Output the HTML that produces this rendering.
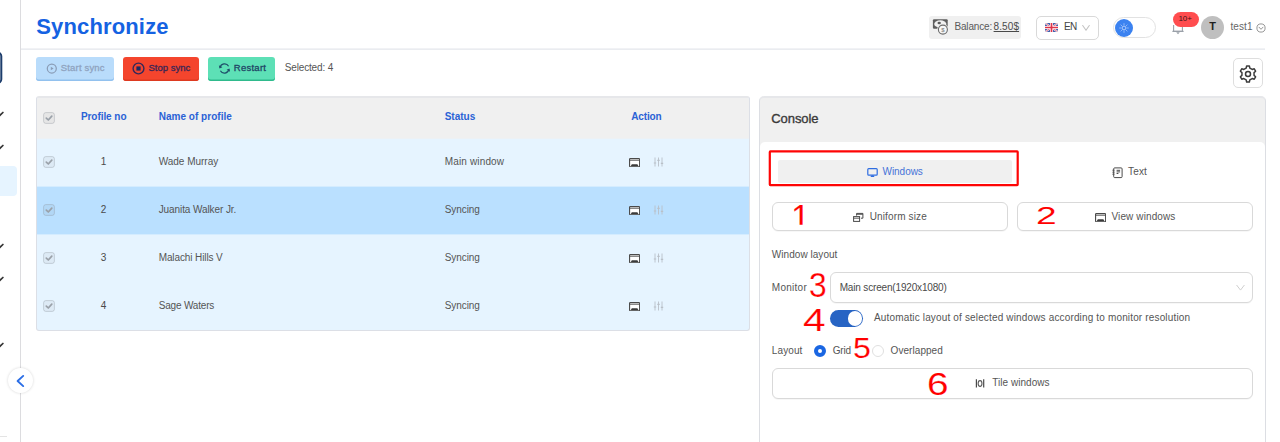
<!DOCTYPE html>
<html lang="en">
<head>
<meta charset="utf-8">
<title>Synchronize</title>
<style>
html,body{margin:0;padding:0;background:#fff}
html{width:1280px;height:442px;overflow:hidden}
body{width:1280px;height:442px;overflow:hidden;position:relative;font-family:"Liberation Sans",sans-serif}
.b{position:absolute;display:block}
.t{position:absolute;white-space:nowrap;line-height:1;display:block}

</style>
</head>
<body>
<aside class="side">
<div class="b " style="left:20px;top:0px;width:1px;height:442px;background:#dcdcdf"></div>
<svg class="b" style="left:0px;top:48px;" width="6" height="40" viewBox="0 48 6 40"><rect x="-20" y="52.7" width="21.3" height="30.2" rx="3.6" fill="#fff" stroke="#1d3d6c" stroke-width="2"/></svg>
<svg class="b" style="left:-6px;top:111.3px;" width="10" height="8" viewBox="-6 -4 10 8"><path d="M-5 -2.2 L-1.4 1.6 L2.9 -2.5" fill="none" stroke="#333" stroke-width="1.7" stroke-linecap="round" stroke-linejoin="round"/></svg>
<svg class="b" style="left:-6px;top:144.2px;" width="10" height="8" viewBox="-6 -4 10 8"><path d="M-5 -2.2 L-1.4 1.6 L2.9 -2.5" fill="none" stroke="#333" stroke-width="1.7" stroke-linecap="round" stroke-linejoin="round"/></svg>
<svg class="b" style="left:-6px;top:242.8px;" width="10" height="8" viewBox="-6 -4 10 8"><path d="M-5 -2.2 L-1.4 1.6 L2.9 -2.5" fill="none" stroke="#333" stroke-width="1.7" stroke-linecap="round" stroke-linejoin="round"/></svg>
<svg class="b" style="left:-6px;top:275.6px;" width="10" height="8" viewBox="-6 -4 10 8"><path d="M-5 -2.2 L-1.4 1.6 L2.9 -2.5" fill="none" stroke="#333" stroke-width="1.7" stroke-linecap="round" stroke-linejoin="round"/></svg>
<svg class="b" style="left:-6px;top:341.6px;" width="10" height="8" viewBox="-6 -4 10 8"><path d="M-5 -2.2 L-1.4 1.6 L2.9 -2.5" fill="none" stroke="#333" stroke-width="1.7" stroke-linecap="round" stroke-linejoin="round"/></svg>
<div class="b " style="left:-10px;top:166px;width:27px;height:30px;background:#e6f4ff;border-radius:4px"></div>
<div class="b " style="left:0px;top:436px;width:7px;height:1px;background:#e4e4e4"></div>
<div class="b " style="left:8px;top:368px;width:25px;height:25px;border-radius:50%;background:#fff;box-shadow:0 0 3px rgba(0,0,0,.16)"></div>
<svg class="b" style="left:14px;top:374px;" width="12" height="14" viewBox="0 0 12 14"><path d="M9.2 1.9 L3.6 7 L9.2 12.1" fill="none" stroke="#2b6ee6" stroke-width="1.9" stroke-linecap="round" stroke-linejoin="round"/></svg>
</aside>
<header class="head">
<div class="b " style="left:21px;top:48px;width:1244px;height:1px;background:#f1f2f5"></div>
<div class="b " style="left:21px;top:49px;width:1244px;height:1px;background:#eaecf0"></div>
<span class="t " style="left:36.20px;top:16.00px;font-size:22px;color:#1562e2;font-weight:bold;letter-spacing:0.152px;">Synchronize</span>
<div class="b " style="left:929px;top:16px;width:92px;height:23px;background:#f0f0f0;border-radius:3px"></div>
<svg class="b" style="left:932px;top:18px;" width="17" height="18" viewBox="0 0 17 18"><rect x="0.9" y="1.2" width="14.8" height="9.6" rx="1.1" fill="#5e5e5e"/><ellipse cx="8.3" cy="6" rx="6.1" ry="3.7" fill="#f1f1f1"/><ellipse cx="7.2" cy="5" rx="1.7" ry="1.3" fill="#5a5a5a"/><circle cx="10.9" cy="11.6" r="5.7" fill="#f0f0f0"/><circle cx="10.9" cy="11.6" r="4.5" fill="#f7f7f7" stroke="#6c6c6c" stroke-width="1.1"/><text x="10.8" y="13.6" font-size="6" font-weight="bold" text-anchor="middle" fill="#8a8a8a" font-family="Liberation Sans, sans-serif">$</text></svg>
<span class="t " style="left:954.40px;top:22.00px;font-size:10px;color:#5a5a5a;letter-spacing:-0.145px;">Balance:</span>
<span class="t " style="left:993.60px;top:22.00px;font-size:10px;color:#4a4a4a;letter-spacing:0.095px;text-decoration:underline;text-decoration-thickness:1px;text-underline-offset:1px">8.50$</span>
<div class="b " style="left:1036px;top:16px;width:63px;height:24px;border:1px solid #d9d9d9;border-radius:5px;background:#fff;box-sizing:border-box"></div>
<svg class="b" style="left:1045px;top:23px;border-radius:2px" width="13" height="9" viewBox="0 0 26 18"><rect width="26" height="18" rx="3" fill="#4560ad"/><path d="M0 0 L26 18 M26 0 L0 18" stroke="#fff" stroke-width="3.6"/><path d="M0 0 L26 18 M26 0 L0 18" stroke="#e0344a" stroke-width="1.4"/><path d="M13 0 V18 M0 9 H26" stroke="#fff" stroke-width="6"/><path d="M13 0 V18 M0 9 H26" stroke="#e0344a" stroke-width="3.4"/></svg>
<span class="t " style="left:1064.00px;top:22.00px;font-size:10px;color:#444;letter-spacing:-0.600px;">EN</span>
<svg class="b" style="left:1082px;top:24px;" width="8" height="8" viewBox="0 0 8 8"><path d="M0.7 1.5 L4 6.3 L7.3 1.5" fill="none" stroke="#c4c4c4" stroke-width="1.1" stroke-linecap="round" stroke-linejoin="round"/></svg>
<div class="b " style="left:1113px;top:17px;width:43px;height:21px;border:1px solid #e2e2e2;border-radius:11px;background:#fff;box-sizing:border-box"></div>
<div class="b " style="left:1115px;top:18.5px;width:18px;height:18px;border-radius:50%;background:#3b82f0"></div>
<svg class="b" style="left:1118px;top:21.5px;" width="12" height="12" viewBox="-6 -6 12 12"><circle r="1.9" fill="none" stroke="#cfe0ff" stroke-width="0.9" opacity="0.85"/><path d="M0 -4.4V-3.1 M0 3.1V4.4 M-4.4 0H-3.1 M3.1 0H4.4 M-3.1 -3.1L-2.2 -2.2 M2.2 2.2L3.1 3.1 M-3.1 3.1L-2.2 2.2 M2.2 -2.2L3.1 -3.1" stroke="#cfe0ff" stroke-width="0.8" stroke-linecap="round" opacity="0.7"/></svg>
<svg class="b" style="left:1172px;top:22px;" width="12" height="13" viewBox="0 0 12 13"><path d="M1.6 3 V9.2 H10.4 V3" fill="none" stroke="#9aa0a8" stroke-width="1.1"/><path d="M0.4 9.4 H11.6" stroke="#9aa0a8" stroke-width="1.2"/><path d="M4.2 10.2 L6 12.2 L7.8 10.2 Z" fill="#9aa0a8"/></svg>
<div class="b " style="left:1172.5px;top:12px;width:26px;height:15px;background:#ff4d4f;border-radius:8px"></div>
<span class="t " style="left:1135.20px;width:100px;text-align:center;top:15.00px;font-size:8px;color:#3a1616;letter-spacing:-0.145px;text-indent:-0.145px;">10+</span>
<div class="b " style="left:1201px;top:16px;width:23px;height:23px;border-radius:50%;background:#bfbfbf"></div>
<span class="t " style="left:1162.50px;width:100px;text-align:center;top:21.00px;font-size:11px;color:#1f1f1f;font-weight:bold;">T</span>
<span class="t " style="left:1230.50px;top:22.00px;font-size:10px;color:#666;letter-spacing:0.080px;">test1</span>
<svg class="b" style="left:1255.5px;top:23px;" width="10" height="10" viewBox="0 0 10 10"><circle cx="5" cy="5" r="4.1" fill="none" stroke="#8a8a8a" stroke-width="0.9"/><path d="M3 4.2 L5 6.3 L7 4.2" fill="none" stroke="#8a8a8a" stroke-width="0.9" stroke-linecap="round" stroke-linejoin="round"/></svg>
</header>
<div class="tools">
<div class="b " style="left:36px;top:57px;width:78px;height:24px;background:#b9dcfb;border-radius:3px;box-shadow:inset 0 -1.5px 0 #92c1ee"></div>
<svg class="b" style="left:46px;top:62.5px;" width="11" height="11" viewBox="0 0 11 11"><circle cx="5.8" cy="5.5" r="4.5" fill="none" stroke="#8a9cb6" stroke-width="1.25"/><path d="M4.8 3.7 L7.6 5.5 L4.8 7.3 Z" fill="#8a9cb6"/></svg>
<span class="t " style="left:60.80px;top:63.00px;font-size:9.5px;color:#8fa3c0;letter-spacing:0.171px;-webkit-text-stroke:0.3px #8fa3c0">Start sync</span>
<div class="b " style="left:123px;top:57px;width:76px;height:24px;background:#f4452d;border-radius:3px;box-shadow:inset 0 -1.5px 0 #dd3a20"></div>
<svg class="b" style="left:132.3px;top:61.5px;" width="13" height="13" viewBox="0 0 13 13"><circle cx="6.5" cy="6.5" r="5.4" fill="none" stroke="#33285a" stroke-width="1.4"/><rect x="4.4" y="4.4" width="4.2" height="4.2" fill="#1d2a63"/></svg>
<span class="t " style="left:148.50px;top:63.00px;font-size:9.5px;color:#3b2555;letter-spacing:-0.005px;-webkit-text-stroke:0.3px #3b2555">Stop sync</span>
<div class="b " style="left:208px;top:57px;width:67px;height:24px;background:#5de0b6;border-radius:3px;box-shadow:inset 0 -1.5px 0 #2fba8c"></div>
<svg class="b" style="left:217.5px;top:62px;" width="13" height="13" viewBox="0 0 13 13"><path d="M2.1 5.6 A4.6 4.6 0 0 1 10.6 4.2" fill="none" stroke="#1f4f6a" stroke-width="1.2"/><path d="M10.9 7.4 A4.6 4.6 0 0 1 2.4 8.8" fill="none" stroke="#1f4f6a" stroke-width="1.2"/><path d="M0.9 3.2 L1.5 6.4 L4.4 5.3 Z" fill="#1f4f6a"/><path d="M12.1 9.8 L11.5 6.6 L8.6 7.7 Z" fill="#1f4f6a"/></svg>
<span class="t " style="left:233.80px;top:63.00px;font-size:9.5px;color:#1f4565;letter-spacing:0.259px;-webkit-text-stroke:0.3px #1f4565">Restart</span>
<span class="t " style="left:284.70px;top:63.00px;font-size:10px;color:#555;letter-spacing:-0.143px;">Selected: 4</span>
<div class="b " style="left:1233px;top:58px;width:30px;height:30px;border:1px solid #dedede;border-radius:5px;background:#fff;box-sizing:border-box"></div>
<svg class="b" style="left:1239px;top:64.5px;" width="18" height="18" viewBox="-9 -9 18 18"><path d="M-1.83 -5.92 L-1.37 -7.98 L1.37 -7.98 L1.83 -5.92 L4.21 -4.55 L6.23 -5.18 L7.60 -2.80 L6.05 -1.37 L6.05 1.37 L7.60 2.80 L6.23 5.18 L4.21 4.55 L1.83 5.92 L1.37 7.98 L-1.37 7.98 L-1.83 5.92 L-4.21 4.55 L-6.23 5.18 L-7.60 2.80 L-6.05 1.37 L-6.05 -1.37 L-7.60 -2.80 L-6.23 -5.18 L-4.21 -4.55 Z" fill="none" stroke="#3c3c3c" stroke-width="1.5" stroke-linejoin="round"/><circle r="2.5" fill="none" stroke="#3c3c3c" stroke-width="1.5"/></svg>
</div>
<section class="tbl">
<div class="b " style="left:36px;top:96px;width:714px;height:235px;border:1px solid #dcdfe6;border-top:2px solid #e6e7ea;border-radius:3px;box-sizing:border-box;overflow:hidden;background:#e6f4ff"><div class="b " style="left:0px;top:0px;width:714px;height:40px;background:#f0f0f0"></div><div class="b " style="left:0px;top:40px;width:714px;height:1px;background:#edf1f4"></div><div class="b " style="left:0px;top:88px;width:714px;height:49px;background:#d4ecff"></div><div class="b " style="left:0px;top:89px;width:714px;height:47px;background:#bae0ff"></div></div>
<span class="t " style="left:53.70px;width:100px;text-align:center;top:112.00px;font-size:10px;color:#2a62d6;font-weight:bold;letter-spacing:-0.057px;text-indent:-0.057px;">Profile no</span>
<span class="t " style="left:158.70px;top:112.00px;font-size:10px;color:#2a62d6;font-weight:bold;letter-spacing:0.023px;">Name of profile</span>
<span class="t " style="left:444.70px;top:112.00px;font-size:10px;color:#2a62d6;font-weight:bold;letter-spacing:0.008px;">Status</span>
<span class="t " style="left:596.40px;width:100px;text-align:center;top:112.00px;font-size:10px;color:#2a62d6;font-weight:bold;letter-spacing:-0.151px;text-indent:-0.151px;">Action</span>
<svg class="b" style="left:41px;top:109.5px;" width="16" height="16" viewBox="0 0 16 16"><rect x="2.6" y="2.6" width="10.8" height="10.8" rx="2.2" fill="rgba(0,0,0,.04)" stroke="rgba(140,146,155,.36)" stroke-width="1"/><path d="M5.3 8.1 L7.3 10 L10.8 6.2" fill="none" stroke="#9aa1a9" stroke-width="1.7" stroke-linecap="round" stroke-linejoin="round"/></svg>
<svg class="b" style="left:41px;top:154.4px;" width="16" height="16" viewBox="0 0 16 16"><rect x="2.6" y="2.6" width="10.8" height="10.8" rx="2.2" fill="rgba(0,0,0,.04)" stroke="rgba(140,146,155,.36)" stroke-width="1"/><path d="M5.3 8.1 L7.3 10 L10.8 6.2" fill="none" stroke="#9aa1a9" stroke-width="1.7" stroke-linecap="round" stroke-linejoin="round"/></svg>
<span class="t " style="left:53.50px;width:100px;text-align:center;top:157.00px;font-size:10px;color:#4a4a4a;">1</span>
<span class="t " style="left:158.70px;top:157.00px;font-size:10px;color:#555;letter-spacing:-0.014px;">Wade Murray</span>
<span class="t " style="left:444.70px;top:157.00px;font-size:10px;color:#555;letter-spacing:0.155px;">Main window</span>
<svg class="b" style="left:629px;top:157.8px;" width="11.2" height="9.3" viewBox="0 0 12 10"><rect x="0.6" y="0.6" width="10.8" height="8.8" rx="0.8" fill="#fff" stroke="#4a4a4a" stroke-width="1.2"/><path d="M0.6 2.3 H11.4" stroke="#4a4a4a" stroke-width="1.1"/><path d="M1.8 9 L3 6.6 H9 L10.2 9 Z" fill="#3a3a3a"/></svg>
<svg class="b" style="left:653px;top:157px;" width="11" height="10" viewBox="0 0 11 10"><path d="M2 0.5 V9.5 M5.5 0.5 V9.5 M9 0.5 V9.5" stroke="#b9c0c8" stroke-width="0.9"/><path d="M0.8 6 H3.2 M4.3 3.4 H6.7 M7.8 6.4 H10.2" stroke="#b9c0c8" stroke-width="1.1"/></svg>
<svg class="b" style="left:41px;top:202.4px;" width="16" height="16" viewBox="0 0 16 16"><rect x="2.6" y="2.6" width="10.8" height="10.8" rx="2.2" fill="rgba(0,0,0,.04)" stroke="rgba(140,146,155,.36)" stroke-width="1"/><path d="M5.3 8.1 L7.3 10 L10.8 6.2" fill="none" stroke="#9aa1a9" stroke-width="1.7" stroke-linecap="round" stroke-linejoin="round"/></svg>
<span class="t " style="left:53.50px;width:100px;text-align:center;top:205.00px;font-size:10px;color:#4a4a4a;">2</span>
<span class="t " style="left:158.70px;top:205.00px;font-size:10px;color:#555;letter-spacing:-0.088px;">Juanita Walker Jr.</span>
<span class="t " style="left:444.70px;top:205.00px;font-size:10px;color:#555;letter-spacing:-0.062px;">Syncing</span>
<svg class="b" style="left:629px;top:205.8px;" width="11.2" height="9.3" viewBox="0 0 12 10"><rect x="0.6" y="0.6" width="10.8" height="8.8" rx="0.8" fill="#fff" stroke="#4a4a4a" stroke-width="1.2"/><path d="M0.6 2.3 H11.4" stroke="#4a4a4a" stroke-width="1.1"/><path d="M1.8 9 L3 6.6 H9 L10.2 9 Z" fill="#3a3a3a"/></svg>
<svg class="b" style="left:653px;top:205px;" width="11" height="10" viewBox="0 0 11 10"><path d="M2 0.5 V9.5 M5.5 0.5 V9.5 M9 0.5 V9.5" stroke="#b9c0c8" stroke-width="0.9"/><path d="M0.8 6 H3.2 M4.3 3.4 H6.7 M7.8 6.4 H10.2" stroke="#b9c0c8" stroke-width="1.1"/></svg>
<svg class="b" style="left:41px;top:250.39999999999998px;" width="16" height="16" viewBox="0 0 16 16"><rect x="2.6" y="2.6" width="10.8" height="10.8" rx="2.2" fill="rgba(0,0,0,.04)" stroke="rgba(140,146,155,.36)" stroke-width="1"/><path d="M5.3 8.1 L7.3 10 L10.8 6.2" fill="none" stroke="#9aa1a9" stroke-width="1.7" stroke-linecap="round" stroke-linejoin="round"/></svg>
<span class="t " style="left:53.50px;width:100px;text-align:center;top:253.00px;font-size:10px;color:#4a4a4a;">3</span>
<span class="t " style="left:158.70px;top:253.00px;font-size:10px;color:#555;letter-spacing:-0.105px;">Malachi Hills V</span>
<span class="t " style="left:444.70px;top:253.00px;font-size:10px;color:#555;letter-spacing:-0.062px;">Syncing</span>
<svg class="b" style="left:629px;top:253.8px;" width="11.2" height="9.3" viewBox="0 0 12 10"><rect x="0.6" y="0.6" width="10.8" height="8.8" rx="0.8" fill="#fff" stroke="#4a4a4a" stroke-width="1.2"/><path d="M0.6 2.3 H11.4" stroke="#4a4a4a" stroke-width="1.1"/><path d="M1.8 9 L3 6.6 H9 L10.2 9 Z" fill="#3a3a3a"/></svg>
<svg class="b" style="left:653px;top:253px;" width="11" height="10" viewBox="0 0 11 10"><path d="M2 0.5 V9.5 M5.5 0.5 V9.5 M9 0.5 V9.5" stroke="#b9c0c8" stroke-width="0.9"/><path d="M0.8 6 H3.2 M4.3 3.4 H6.7 M7.8 6.4 H10.2" stroke="#b9c0c8" stroke-width="1.1"/></svg>
<svg class="b" style="left:41px;top:298.4px;" width="16" height="16" viewBox="0 0 16 16"><rect x="2.6" y="2.6" width="10.8" height="10.8" rx="2.2" fill="rgba(0,0,0,.04)" stroke="rgba(140,146,155,.36)" stroke-width="1"/><path d="M5.3 8.1 L7.3 10 L10.8 6.2" fill="none" stroke="#9aa1a9" stroke-width="1.7" stroke-linecap="round" stroke-linejoin="round"/></svg>
<span class="t " style="left:53.50px;width:100px;text-align:center;top:301.00px;font-size:10px;color:#4a4a4a;">4</span>
<span class="t " style="left:158.70px;top:301.00px;font-size:10px;color:#555;letter-spacing:-0.183px;">Sage Waters</span>
<span class="t " style="left:444.70px;top:301.00px;font-size:10px;color:#555;letter-spacing:-0.062px;">Syncing</span>
<svg class="b" style="left:629px;top:301.8px;" width="11.2" height="9.3" viewBox="0 0 12 10"><rect x="0.6" y="0.6" width="10.8" height="8.8" rx="0.8" fill="#fff" stroke="#4a4a4a" stroke-width="1.2"/><path d="M0.6 2.3 H11.4" stroke="#4a4a4a" stroke-width="1.1"/><path d="M1.8 9 L3 6.6 H9 L10.2 9 Z" fill="#3a3a3a"/></svg>
<svg class="b" style="left:653px;top:301px;" width="11" height="10" viewBox="0 0 11 10"><path d="M2 0.5 V9.5 M5.5 0.5 V9.5 M9 0.5 V9.5" stroke="#b9c0c8" stroke-width="0.9"/><path d="M0.8 6 H3.2 M4.3 3.4 H6.7 M7.8 6.4 H10.2" stroke="#b9c0c8" stroke-width="1.1"/></svg>
</section>
<section class="con">
<div class="b " style="left:759px;top:96px;width:507px;height:346px;border:1px solid #dcdee3;border-top:2px solid #e6e7ea;border-bottom:0;border-radius:5px 5px 0 0;box-sizing:border-box;background:#f0f0f0;overflow:hidden"><div class="b " style="left:0px;top:44px;width:505px;height:300px;background:#fff;border-radius:5px 5px 0 0"></div></div>
<span class="t " style="left:771.30px;top:112.00px;font-size:13px;color:#3a3a3a;letter-spacing:-0.069px;-webkit-text-stroke:0.35px #3a3a3a">Console</span>
<div class="b " style="left:778px;top:160px;width:234px;height:23px;background:#f0f0f0;border-radius:2px"></div>
<svg class="b" style="left:760px;top:145px;" width="270" height="50" viewBox="760 145 270 50"><rect x="769.8" y="151.4" width="247.9" height="33.8" rx="0.6" fill="none" stroke="#fe0505" stroke-width="2.2"/></svg>
<svg class="b" style="left:866.5px;top:167.5px;" width="11" height="10" viewBox="0 0 11 10"><rect x="0.8" y="0.7" width="9.4" height="6.4" rx="0.9" fill="none" stroke="#2f6de0" stroke-width="1.2"/><path d="M3.4 9 H7.6 L6.4 7.3 H4.6 Z" fill="#2f6de0"/></svg>
<span class="t " style="left:882.50px;top:167.00px;font-size:10px;color:#4673d8;letter-spacing:-0.036px;">Windows</span>
<svg class="b" style="left:1112px;top:166.6px;" width="11" height="12" viewBox="0 0 11 12"><rect x="1.7" y="0.9" width="8.4" height="9.7" rx="1" fill="none" stroke="#4a4a4a" stroke-width="1"/><path d="M0.3 3.2 H2.6 M0.3 5.2 H2.6 M0.3 7.2 H2.6" stroke="#4a4a4a" stroke-width="0.8"/><path d="M4.6 3.3 H8.1 M4.6 4.9 H8.1 M4.6 6.5 H6.4" stroke="#4a4a4a" stroke-width="1"/></svg>
<span class="t " style="left:1128.00px;top:167.00px;font-size:10px;color:#555;letter-spacing:0.187px;">Text</span>
<div class="b " style="left:772px;top:202px;width:236px;height:29px;border:1px solid #d9d9d9;border-radius:6px;box-sizing:border-box;background:#fff;box-shadow:0 1px 0 rgba(0,0,0,.03)"></div>
<div class="b " style="left:1017px;top:202px;width:236px;height:29px;border:1px solid #d9d9d9;border-radius:6px;box-sizing:border-box;background:#fff;box-shadow:0 1px 0 rgba(0,0,0,.03)"></div>
<svg class="b" style="left:852.5px;top:212px;" width="11" height="10" viewBox="0 0 11 10"><rect x="0.6" y="4.6" width="6" height="4.8" fill="#fff" stroke="#4a4a4a" stroke-width="1"/><path d="M0.6 6.2 H6.6" stroke="#4a4a4a" stroke-width="0.9"/><path d="M3.6 3.6 V1.4 H9.9 V6.2 H8" fill="none" stroke="#4a4a4a" stroke-width="1"/><path d="M3.6 2.3 H9.9" stroke="#4a4a4a" stroke-width="0.9"/></svg>
<span class="t " style="left:869.70px;top:212.00px;font-size:10px;color:#555;letter-spacing:0.140px;">Uniform size</span>
<svg class="b" style="left:1094.6px;top:212.6px;" width="11.2" height="9.3" viewBox="0 0 12 10"><rect x="0.6" y="0.6" width="10.8" height="8.8" rx="0.8" fill="#fff" stroke="#4a4a4a" stroke-width="1.2"/><path d="M0.6 2.3 H11.4" stroke="#4a4a4a" stroke-width="1.1"/><path d="M1.8 9 L3 6.6 H9 L10.2 9 Z" fill="#3a3a3a"/></svg>
<span class="t " style="left:1111.50px;top:212.00px;font-size:10px;color:#555;letter-spacing:0.112px;">View windows</span>
<span class="t " style="left:771.80px;top:250.00px;font-size:10px;color:#555;letter-spacing:0.048px;">Window layout</span>
<span class="t " style="left:771.80px;top:283.00px;font-size:10px;color:#555;letter-spacing:0.268px;">Monitor</span>
<div class="b " style="left:830px;top:272px;width:423px;height:31px;border:1px solid #d9d9d9;border-radius:6px;box-sizing:border-box;background:#fff;box-shadow:0 1px 0 rgba(0,0,0,.03)"></div>
<span class="t " style="left:839.70px;top:283.00px;font-size:10px;color:#4a4a4a;letter-spacing:-0.167px;">Main screen(1920x1080)</span>
<svg class="b" style="left:1236px;top:284px;" width="9" height="8" viewBox="0 0 9 8"><path d="M0.8 1.3 L4.5 6.1 L8.2 1.3" fill="none" stroke="#cfcfcf" stroke-width="1" stroke-linecap="round" stroke-linejoin="round"/></svg>
<div class="b " style="left:830px;top:310px;width:33px;height:17px;background:#2764c4;border-radius:9px"></div>
<div class="b " style="left:847.5px;top:311.2px;width:14.6px;height:14.6px;background:#fff;border-radius:50%"></div>
<span class="t " style="left:874.00px;top:313.00px;font-size:10px;color:#555;letter-spacing:0.154px;">Automatic layout of selected windows according to monitor resolution</span>
<span class="t " style="left:771.80px;top:346.00px;font-size:10px;color:#555;letter-spacing:0.116px;">Layout</span>
<div class="b " style="left:814.3px;top:345.3px;width:12px;height:12px;border-radius:50%;background:#fff;border:4px solid #1a66e2;box-sizing:border-box"></div>
<span class="t " style="left:832.70px;top:346.00px;font-size:10px;color:#555;letter-spacing:-0.147px;">Grid</span>
<div class="b " style="left:872.2px;top:345.3px;width:12px;height:12px;border-radius:50%;background:#fff;border:1px solid #e0e0e0;box-sizing:border-box"></div>
<span class="t " style="left:890.60px;top:346.00px;font-size:10px;color:#555;letter-spacing:0.056px;">Overlapped</span>
<div class="b " style="left:772px;top:368px;width:481px;height:31px;border:1px solid #d9d9d9;border-radius:6px;box-sizing:border-box;background:#fff;box-shadow:0 1px 0 rgba(0,0,0,.03)"></div>
<svg class="b" style="left:975px;top:379px;" width="10" height="9" viewBox="0 0 10 9"><path d="M1.4 0.3 V8.6 M8.7 0.3 V8.6" stroke="#4a4a4a" stroke-width="1.2"/><ellipse cx="5.05" cy="4.5" rx="1.9" ry="2.9" fill="none" stroke="#5a5a5a" stroke-width="1.1"/></svg>
<span class="t " style="left:992.20px;top:378.00px;font-size:10px;color:#555;letter-spacing:0.044px;">Tile windows</span>
<span class="t r" style="left:791.10px;top:199.50px;font-size:34.40px;color:#ff0000;-webkit-text-stroke:0.1px #fff;clip-path:inset(0 0 0.268em 0);transform-origin:0 0;transform:scaleX(1.000)">1</span>
<span class="t r" style="left:1036.30px;top:204.20px;font-size:24.26px;color:#ff0000;-webkit-text-stroke:0.1px #fff;transform-origin:0 0;transform:scaleX(1.534)">2</span>
<span class="t r" style="left:809.20px;top:267.60px;font-size:35.82px;color:#ff0000;-webkit-text-stroke:0.25px #fff;transform-origin:0 0;transform:scaleX(0.886)">3</span>
<span class="t r" style="left:803.30px;top:304.50px;font-size:31.43px;color:#ff0000;-webkit-text-stroke:0.15px #fff;transform-origin:0 0;transform:scaleX(1.292)">4</span>
<span class="t r" style="left:853.10px;top:332.70px;font-size:29.79px;color:#ff0000;-webkit-text-stroke:0.15px #fff;transform-origin:0 0;transform:scaleX(1.078)">5</span>
<span class="t r" style="left:926.70px;top:368.30px;font-size:31.98px;color:#ff0000;-webkit-text-stroke:0.15px #fff;transform-origin:0 0;transform:scaleX(1.212)">6</span>
</section>
</body>
</html>
